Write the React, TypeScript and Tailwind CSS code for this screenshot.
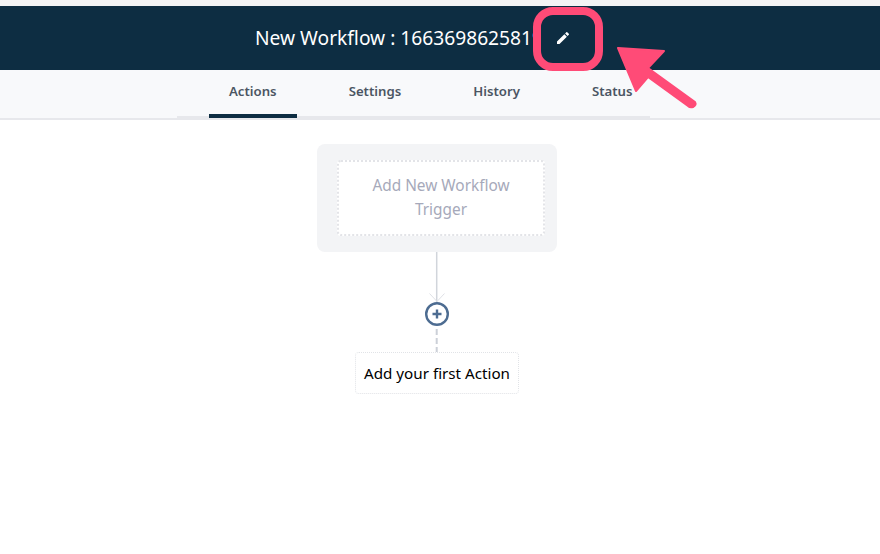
const font = "font-['Noto_Sans','Open_Sans',sans-serif]"

function Connector() {
  return (
    <div className="flex flex-col items-center">
      <svg width="24" height="50" viewBox="0 0 24 50" className="block">
        <path d="M11.7 0V50" stroke="#d1d5db" strokeWidth="1.5" fill="none" />
        <path d="M4.5 41.5l7.5 8 7.5-8" stroke="#dfe1e6" strokeWidth="1" fill="none" />
      </svg>
      <svg width="24" height="24" viewBox="0 0 24 24" className="block">
        <circle cx="12" cy="12" r="10.8" stroke="#4d6c91" strokeWidth="2.4" fill="#fff" />
        <path d="M12 7.5v9M7.5 12h9" stroke="#4d6c91" strokeWidth="2.4" />
      </svg>
      <svg width="24" height="26" viewBox="0 0 24 26" className="block">
        <path d="M11.7 3V26" stroke="#ccd0d8" strokeWidth="2" strokeDasharray="6 3" fill="none" />
      </svg>
    </div>
  )
}

export default function App() {
  const tabClass = 'h-[48px] px-5 flex items-center text-[13.2px] font-semibold text-[#4b5563] border-b-4'
  return (
    <div className={`relative w-[880px] h-[554px] overflow-hidden bg-white ${font}`}>
      <div className="h-1.5 bg-[#f4f4f5]" />
      <header className="h-16 bg-[#0d2d42] flex items-center pl-[255px]">
        <h1 className="w-[282px] overflow-hidden whitespace-nowrap text-white text-[19.2px] leading-7">
          New Workflow : 1663698625819
        </h1>
        <svg width="16" height="16" viewBox="0 0 24 24" fill="#fff" className="ml-[18px] mb-[1px]">
          <path d="M3 17.25V21h3.75L17.81 9.94l-3.75-3.75L3 17.25zM20.71 7.04a1 1 0 0 0 0-1.41l-2.34-2.34a1 1 0 0 0-1.41 0l-1.83 1.83 3.75 3.75 1.83-1.83z" />
        </svg>
      </header>
      <nav className="h-[50px] bg-[#f8f9fb] border-b-2 border-[#e7e8ec] flex justify-start pl-[177px]">
        <div className="h-[48px] w-[473px] border-b-2 border-[#e7e8ec] flex gap-8 pl-8">
          <a className={`${tabClass} border-[#0d2d42]`}>Actions</a>
          <a className={`${tabClass} border-transparent`}>Settings</a>
          <a className={`${tabClass} border-transparent`}>History</a>
          <a className={`${tabClass} border-transparent`}>Status</a>
        </div>
      </nav>
      <main className="flex flex-col items-center pt-6 pr-1.5">
        <div className="w-60 h-[108px] rounded-lg bg-[#f3f4f6] pt-4 pl-5 pr-3">
          <div className="h-[76px] rounded border-2 border-dotted border-[#e3e4e8] bg-white flex items-center justify-center text-center text-[15.4px] leading-6 text-[#a6a9ba] px-6">
            Add New Workflow Trigger
          </div>
        </div>
        <Connector />
        <div className="w-[164px] h-[42px] rounded border border-dotted border-[#e1e3e7] bg-white flex items-center justify-center text-[15.2px] text-black">
          Add your first Action
        </div>
      </main>
      <div className="absolute left-[533px] top-[7px] w-[70px] h-[64px] rounded-[20px] border-[8px] border-[#ff4b77]" />
      <svg width="100" height="80" viewBox="0 0 100 80" className="absolute left-[610px] top-[40px]">
        <path d="M8 8L54 11L38 28L85 62Q87 65 83 67Q80 68 78 66L38 37L26 51Z" fill="#ff4b77" stroke="#ff4b77" strokeWidth="2" strokeLinejoin="round" />
      </svg>
    </div>
  )
}
